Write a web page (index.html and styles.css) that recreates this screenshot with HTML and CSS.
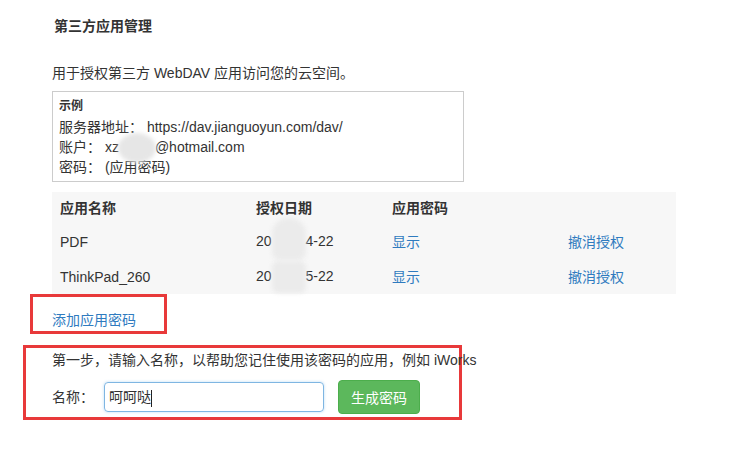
FILE: index.html
```html
<!DOCTYPE html>
<html lang="zh-CN">
<head>
    <meta charset="UTF-8">
    <title>第三方应用管理</title>
    <link rel="stylesheet" href="styles.css">
</head>
<body>
    <div class="page">
        <h3 class="title">第三方应用管理</h3>
        <p class="intro">用于授权第三方 WebDAV 应用访问您的云空间。</p>

        <div class="example">
            <div class="example-head">示例</div>
            <div>服务器地址： https://dav.jianguoyun.com/dav/</div>
            <div>账户： xz<span class="blur blur-mail"></span>@hotmail.com</div>
            <div>密码： (应用密码)</div>
        </div>

        <table class="apps">
            <thead>
                <tr>
                    <th class="col-name">应用名称</th>
                    <th class="col-date">授权日期</th>
                    <th class="col-pass">应用密码</th>
                    <th class="col-act"></th>
                </tr>
            </thead>
            <tbody>
                <tr>
                    <td>PDF</td>
                    <td>20<span class="blur blur-date tall"></span>4-22</td>
                    <td><a href="#">显示</a></td>
                    <td><a href="#">撤消授权</a></td>
                </tr>
                <tr>
                    <td>ThinkPad_260</td>
                    <td>20<span class="blur blur-date"></span>5-22</td>
                    <td><a href="#">显示</a></td>
                    <td><a href="#">撤消授权</a></td>
                </tr>
            </tbody>
        </table>

        <div class="mark mark-add">
            <a href="#">添加应用密码</a>
        </div>

        <div class="mark mark-step">
            <p class="step">第一步，请输入名称，以帮助您记住使用该密码的应用，例如 iWorks</p>
            <div class="form-row">
                <label class="label">名称：</label>
                <div class="input">呵呵哒<span class="caret"></span></div>
                <button class="btn-green">生成密码</button>
            </div>
        </div>
    </div>
</body>
</html>
```

FILE: styles.css
```css
* {
    margin: 0;
    padding: 0;
    box-sizing: border-box;
}

body {
    font-family: "Liberation Sans", "Noto Sans CJK SC", sans-serif;
    font-size: 14px;
    color: #333;
    background-color: #fff;
}

a {
    color: #2f7bbf;
    text-decoration: none;
}

.page {
    padding: 16px 0 0 52px;
}

.title {
    font-size: 14px;
    font-weight: bold;
    line-height: 20px;
    margin-left: 2px;
}

.intro {
    line-height: 20px;
    margin-top: 27px;
}

.example {
    width: 412px;
    height: 91px;
    margin-top: 8px;
    padding: 5px 6px 0;
    border: 1px solid #ccc;
    line-height: 20px;
}

.example-head {
    font-size: 12px;
    font-weight: bold;
    line-height: 18px;
    margin-bottom: 2px;
}

.blur {
    display: inline-block;
    background-color: #e2e2e2;
    filter: blur(2px);
    vertical-align: middle;
}

.blur-mail {
    width: 38px;
    height: 30px;
    margin: -7px -1px -7px -1px;
    border-radius: 50%;
    background-color: #e6e6e6;
}

.blur-date {
    width: 34px;
    height: 32px;
    margin: -6px 0;
    border-radius: 6px;
    background-color: #ebebeb;
}

.blur-date.tall {
    height: 42px;
    margin: -14px 0 -8px;
    border-radius: 16px 16px 8px 8px;
}

.apps {
    width: 624px;
    margin-top: 10px;
    border-collapse: collapse;
    background-color: #f7f7f7;
}

.apps th,
.apps td {
    text-align: left;
    padding: 0 0 0 8px;
    line-height: 20px;
}

.apps th {
    height: 32px;
    font-weight: bold;
}

.apps td {
    height: 35px;
}

.apps .col-name { width: 196px; }
.apps .col-date { width: 144px; }
.apps .col-pass { width: 176px; }

.apps td:nth-child(3),
.apps td:nth-child(4),
.apps th:nth-child(3) {
    padding-left: 0;
}

.mark {
    border: 3px solid #e8393a;
}

.mark-add {
    width: 137px;
    height: 40px;
    margin-left: -22px;
    padding: 13px 0 0 19px;
    line-height: 20px;
}

.mark-step {
    width: 439px;
    height: 75px;
    margin: 11px 0 0 -29px;
    padding: 2px 0 0 26px;
}

.step {
    line-height: 20px;
    white-space: nowrap;
}

.form-row {
    display: flex;
    align-items: center;
    margin-top: 10px;
}

.label {
    width: 52px;
    line-height: 20px;
}

.input {
    width: 220px;
    height: 30px;
    padding: 0 4px;
    line-height: 28px;
    border: 1px solid #7fb6e2;
    border-radius: 4px;
    box-shadow: 0 0 3px rgba(102, 175, 233, 0.45);
    color: #333;
}

.caret {
    display: inline-block;
    width: 1px;
    height: 17px;
    background-color: #222;
    vertical-align: middle;
}

.btn-green {
    width: 82px;
    height: 34px;
    margin-left: 14px;
    font-family: inherit;
    font-size: 14px;
    color: #fff;
    background-color: #5cb85c;
    border: 1px solid #4cae4c;
    border-radius: 4px;
}
```
